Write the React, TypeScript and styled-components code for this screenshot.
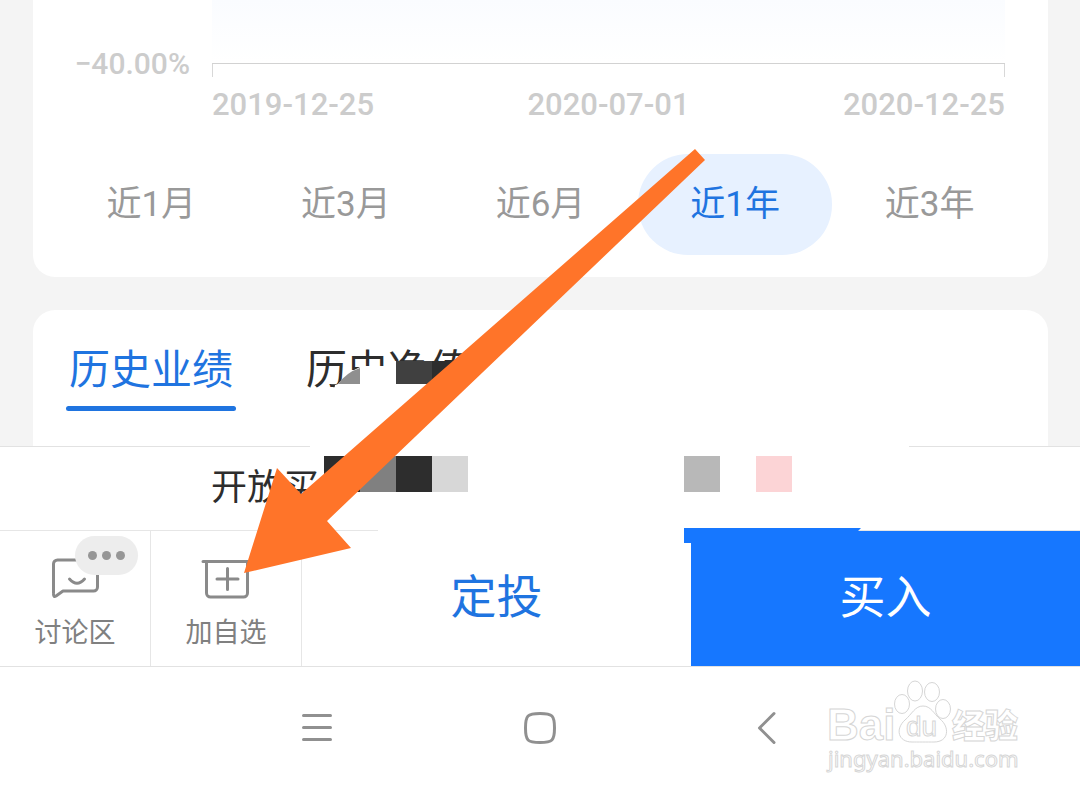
import React from 'react';
import styled, { createGlobalStyle } from 'styled-components';

const GlobalStyle = createGlobalStyle`
  * { box-sizing: border-box; }
  body {
    margin: 0;
    background: #f4f4f4;
    font-family: Roboto, 'Noto Sans CJK SC', sans-serif;
  }
  button { font-family: inherit; border: 0; padding: 0; margin: 0; background: none; cursor: pointer; }
`;

const Page = styled.div`
  position: relative;
  display: flex;
  flex-direction: column;
  min-height: 100vh;
  overflow: hidden;
`;

const Content = styled.main`
  display: flex;
  flex-direction: column;
  gap: 33px;
  padding: 0 32px 0 33px;
`;

const ChartCard = styled.section`
  background: #fff;
  border-radius: 0 0 22px 22px;
  padding: 0 21px 22px;
`;

const Chart = styled.div`
  display: grid;
  grid-template-columns: 136px 1fr;
  column-gap: 22px;
  padding-right: 22px;
`;

const AxisLabel = styled.div`
  grid-row: 1 / 3;
  align-self: end;
  text-align: right;
  font-size: 30px;
  font-weight: 500;
  line-height: 26px;
  color: #ccc;
`;

const Plot = styled.div`
  height: 64px;
  background: linear-gradient(#fafcff, #fff);
  border-bottom: 1px solid #d2d2d2;
`;

const Ticks = styled.div`
  grid-column: 2;
  height: 13px;
  border: solid #d8d8d8;
  border-width: 0 1px;
`;

const Dates = styled.div`
  grid-column: 2;
  display: flex;
  justify-content: space-between;
  padding-top: 10px;
  font-size: 31px;
  font-weight: 500;
  line-height: 36px;
  color: #ccc;
`;

const Periods = styled.div`
  display: grid;
  grid-template-columns: repeat(5, 1fr);
  margin-top: 31px;
`;

const Period = styled.button<{ $active?: boolean }>`
  height: 101px;
  padding-bottom: 8px;
  border-radius: 50px;
  font-size: 35px;
  color: ${(p) => (p.$active ? '#1f74e0' : '#999')};
  background: ${(p) => (p.$active ? '#e7f1ff' : 'transparent')};
`;

const HistoryCard = styled.section`
  height: 136px;
  background: #fff;
  border-radius: 22px 22px 0 0;
  padding: 30px 33px 0;
  display: flex;
  align-items: flex-start;
  gap: 67px;
`;

const HistoryTab = styled.button<{ $active?: boolean }>`
  font-size: 41px;
  line-height: 60px;
  padding: 0 3px;
  color: ${(p) => (p.$active ? '#1f74e0' : '#2d2d2d')};
  &::after {
    content: '';
    display: ${(p) => (p.$active ? 'block' : 'none')};
    height: 5px;
    border-radius: 3px;
    background: #1f74e0;
    margin: 6px -3px 0;
  }
`;

const Notice = styled.div`
  height: 84px;
  background: #fff;
  border-top: 1px solid #e2e2e2;
  padding-left: 211px;
  font-size: 36px;
  line-height: 82px;
  color: #2d2d2d;
`;

const ActionBar = styled.div`
  display: flex;
  height: 137px;
  background: #fff;
  border-top: 1px solid #e6e6e6;
  border-bottom: 1px solid #e2e2e2;
`;

const IconAction = styled.button`
  position: relative;
  width: 151px;
  flex: none;
  display: flex;
  flex-direction: column;
  align-items: center;
  padding-top: 24px;
  gap: 14px;
  border-right: 1px solid #e6e6e6;
  font-size: 27px;
  line-height: 40px;
  color: #808080;
`;

const Badge = styled.span`
  position: absolute;
  left: 75px;
  top: 5px;
  width: 63px;
  height: 39px;
  border-radius: 20px;
  background: #ededed;
  display: flex;
  align-items: center;
  justify-content: center;
  gap: 5px;
`;

const Dot = styled.i`
  width: 9px;
  height: 9px;
  border-radius: 50%;
  background: #969696;
`;

const MainAction = styled.button<{ $primary?: boolean }>`
  flex: 1;
  padding-bottom: 12px;
  font-size: 46px;
  color: ${(p) => (p.$primary ? '#fff' : '#1f74e0')};
  background: ${(p) => (p.$primary ? '#1677ff' : '#fff')};
`;

const SystemNav = styled.nav`
  flex: 1;
  min-height: 129px;
  background: #fff;
  display: flex;
  justify-content: center;
  align-items: flex-start;
  gap: 177px;
  padding-top: 37px;
`;

const NavButton = styled.button`
  width: 48px;
  height: 48px;
`;

const Overlay = styled.svg`
  position: absolute;
  left: 0;
  top: 0;
  pointer-events: none;
`;

const Watermark = styled.svg`
  position: absolute;
  right: 52px;
  top: 676px;
  pointer-events: none;
`;

const periods = ['近1月', '近3月', '近6月', '近1年', '近3年'];

export default function App() {
  return (
    <Page>
      <GlobalStyle />
      <Content>
        <ChartCard>
          <Chart>
            <AxisLabel>−40.00%</AxisLabel>
            <Plot />
            <Ticks />
            <Dates>
              <span>2019-12-25</span>
              <span>2020-07-01</span>
              <span>2020-12-25</span>
            </Dates>
          </Chart>
          <Periods>
            {periods.map((p) => (
              <Period key={p} $active={p === '近1年'}>{p}</Period>
            ))}
          </Periods>
        </ChartCard>
        <HistoryCard>
          <HistoryTab $active>历史业绩</HistoryTab>
          <HistoryTab>历史净值</HistoryTab>
        </HistoryCard>
      </Content>
      <Notice>开放买</Notice>
      <ActionBar>
        <IconAction>
          <svg width="50" height="44" viewBox="0 0 50 44" fill="none" stroke="#8a8a8a" strokeWidth="3" strokeLinejoin="round" strokeLinecap="round">
            <path d="M3.500 38V9a4 4 0 0 1 4-4H43.500a4 4 0 0 1 4 4V32a4 4 0 0 1-4 4H13L6 41Q3.500 42.500 3.500 39" />
            <path d="M19.500 24q7.500 8.500 15 0" />
          </svg>
          讨论区
          <Badge><Dot /><Dot /><Dot /></Badge>
        </IconAction>
        <IconAction>
          <svg width="50" height="44" viewBox="0 0 50 44" fill="none" stroke="#8a8a8a" strokeWidth="3" strokeLinecap="round">
            <path d="M2 6.500H48M5.500 6.500V38a4 4 0 0 0 4 4H42.500a4 4 0 0 0 4-4V6.500M16 24H37M26.500 13.500V34.500" />
          </svg>
          加自选
        </IconAction>
        <MainAction>定投</MainAction>
        <MainAction $primary>买入</MainAction>
      </ActionBar>
      <SystemNav>
        <NavButton aria-label="菜单">
          <svg width="48" height="48" viewBox="0 0 48 48" stroke="#909090" strokeWidth="3" strokeLinecap="round">
            <path d="M12.500 11.500H39.500M12.500 23.500H39.500M12.500 35.500H39.500" />
          </svg>
        </NavButton>
        <NavButton aria-label="主页">
          <svg width="48" height="48" viewBox="0 0 48 48" stroke="#909090" strokeWidth="3" fill="none">
            <path d="M24 9.500C36.500 9.500 38.500 11.500 38.500 24S36.500 38.500 24 38.500 9.500 36.500 9.500 24 11.500 9.500 24 9.500Z" />
          </svg>
        </NavButton>
        <NavButton aria-label="返回">
          <svg width="48" height="48" viewBox="0 0 48 48" stroke="#909090" strokeWidth="3" fill="none" strokeLinecap="round" strokeLinejoin="round">
            <path d="M33 9.500L18.500 24L33 38.500" />
          </svg>
        </NavButton>
      </SystemNav>

      <Overlay width="1080" height="670" viewBox="0 0 1080 670" aria-hidden="true">
        <path fill="#fff" d="M338 384L348 373L362 366H384V361H480V420H330L335 385Z" />
        <path fill="#fff" d="M310 440H909V449H310ZM378 526H860L858 530H684V535H378Z" />
        <path fill="#8f8f8f" d="M338 384Q347 372 360 368V384Z" />
        <path fill="#404040" d="M396 361H432V384H396Z" />
        <path fill="#2d2d2d" d="M432 361H460V384H432ZM324 456H360V492H324ZM396 456H432V492H396Z" />
        <path fill="#808080" d="M360 456H396V492H360Z" />
        <path fill="#d7d7d7" d="M432 456H468V492H432Z" />
        <path fill="#b8b8b8" d="M684 456H720V492H684Z" />
        <path fill="#fcd4d6" d="M756 456H792V492H756Z" />
        <path fill="#1677ff" d="M684 528H861L858 531H700V543H684Z" />
        <path fill="#ff7429" d="M695 149L705 160L327 521L351 548L244 573L277 468L301 494Z" />
      </Overlay>

      <Watermark width="210" height="104" viewBox="0 0 210 104" aria-hidden="true">
        <g fill="#fff" stroke="#d6d6d6" strokeWidth="1">
          <text x="9" y="64" fontFamily="Liberation Sans, sans-serif" fontWeight="700" fontSize="44">Bai</text>
          <text x="134" y="62" fontFamily="Noto Sans CJK SC, sans-serif" fontWeight="900" fontSize="33">经验</text>
          <ellipse cx="84" cy="28" rx="7.500" ry="9.500" />
          <ellipse cx="97" cy="15" rx="7.500" ry="10" />
          <ellipse cx="114" cy="16" rx="7.500" ry="9.500" />
          <ellipse cx="125" cy="33" rx="7.500" ry="9.500" />
          <path d="M105 30C113 30 116 38 122 43C132 51 131 66 116 66C110 66 99 66 94 66C80 66 77 53 87 44C94 38 97 30 105 30Z" />
          <text x="88" y="60" fontFamily="Liberation Sans, sans-serif" fontSize="28">du</text>
          <text x="10" y="91" fontFamily="Noto Sans, sans-serif" fontSize="22">jingyan.baidu.com</text>
        </g>
      </Watermark>
    </Page>
  );
}
